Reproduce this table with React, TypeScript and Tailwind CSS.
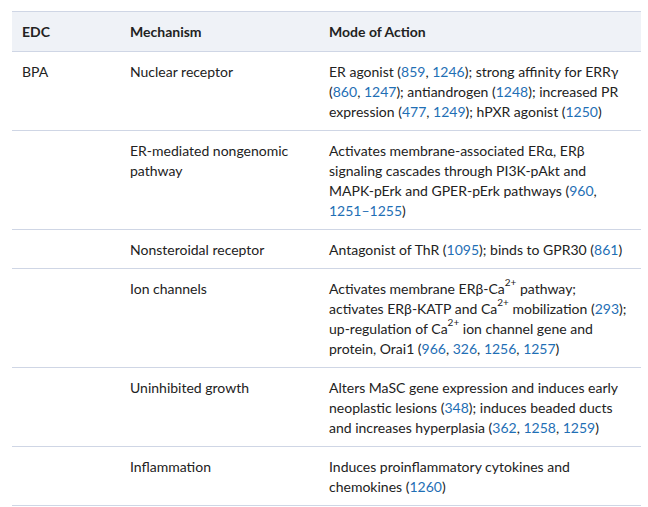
import { ReactNode } from 'react'

function Ref({ children }: { children: ReactNode }) {
  return <a className="text-[#1f6fb5]">{children}</a>
}

function Sup({ children }: { children: ReactNode }) {
  return (
    <sup className="relative -top-[2px] text-[10px] leading-none align-super">{children}</sup>
  )
}

interface Row {
  edc?: string
  mechanism: ReactNode
  action: ReactNode
}

const rows: Row[] = [
  {
    edc: 'BPA',
    mechanism: 'Nuclear receptor',
    action: (
      <>
        ER agonist (<Ref>859</Ref>, <Ref>1246</Ref>); strong affinity for ERRγ
        <br />
        (<Ref>860</Ref>, <Ref>1247</Ref>); antiandrogen (<Ref>1248</Ref>); increased PR
        <br />
        expression (<Ref>477</Ref>, <Ref>1249</Ref>); hPXR agonist (<Ref>1250</Ref>)
      </>
    ),
  },
  {
    mechanism: (
      <>
        ER-mediated nongenomic
        <br />
        pathway
      </>
    ),
    action: (
      <>
        Activates membrane-associated ERα, ERβ
        <br />
        signaling cascades through PI3K-pAkt and
        <br />
        MAPK-pErk and GPER-pErk pathways (<Ref>960</Ref>,
        <br />
        <Ref>1251–1255</Ref>)
      </>
    ),
  },
  {
    mechanism: 'Nonsteroidal receptor',
    action: (
      <>
        Antagonist of ThR (<Ref>1095</Ref>); binds to GPR30 (<Ref>861</Ref>)
      </>
    ),
  },
  {
    mechanism: 'Ion channels',
    action: (
      <>
        Activates membrane ERβ-Ca<Sup>2+</Sup> pathway;
        <br />
        activates ERβ-KATP and Ca<Sup>2+</Sup> mobilization (<Ref>293</Ref>);
        <br />
        up-regulation of Ca<Sup>2+</Sup> ion channel gene and
        <br />
        protein, Orai1 (<Ref>966</Ref>, <Ref>326</Ref>, <Ref>1256</Ref>, <Ref>1257</Ref>)
      </>
    ),
  },
  {
    mechanism: 'Uninhibited growth',
    action: (
      <>
        Alters MaSC gene expression and induces early
        <br />
        neoplastic lesions (<Ref>348</Ref>); induces beaded ducts
        <br />
        and increases hyperplasia (<Ref>362</Ref>, <Ref>1258</Ref>, <Ref>1259</Ref>)
      </>
    ),
  },
  {
    mechanism: 'Inflammation',
    action: (
      <>
        Induces proinflammatory cytokines and
        <br />
        chemokines (<Ref>1260</Ref>)
      </>
    ),
  },
]

export default function App() {
  return (
    <div className="w-[648px] h-[507px] bg-white pt-[11px] pl-[12px] font-['Lato',sans-serif] text-[14px] leading-[20px] text-[#222]">
      <table className="w-[629px] table-fixed border-collapse">
        <colgroup>
          <col className="w-[108px]" />
          <col className="w-[199px]" />
          <col />
        </colgroup>
        <thead>
          <tr className="bg-[#eff2f7] border-y border-[#cfd6e5] text-left">
            <th className="pl-[10px] pt-[10px] pb-[9px] font-bold">EDC</th>
            <th className="pl-[10px] pt-[10px] pb-[9px] font-bold">Mechanism</th>
            <th className="pl-[10px] pt-[10px] pb-[9px] font-bold">Mode of Action</th>
          </tr>
        </thead>
        <tbody>
          {rows.map((row, i) => (
            <tr key={i} className="border-b border-[#cfd6e5] align-top">
              <td className="pl-[10px] pt-[10px] pb-[8px]">{row.edc}</td>
              <td className="pl-[10px] pt-[10px] pb-[8px]">{row.mechanism}</td>
              <td className="pl-[10px] pt-[10px] pb-[8px] whitespace-nowrap">{row.action}</td>
            </tr>
          ))}
        </tbody>
      </table>
    </div>
  )
}
